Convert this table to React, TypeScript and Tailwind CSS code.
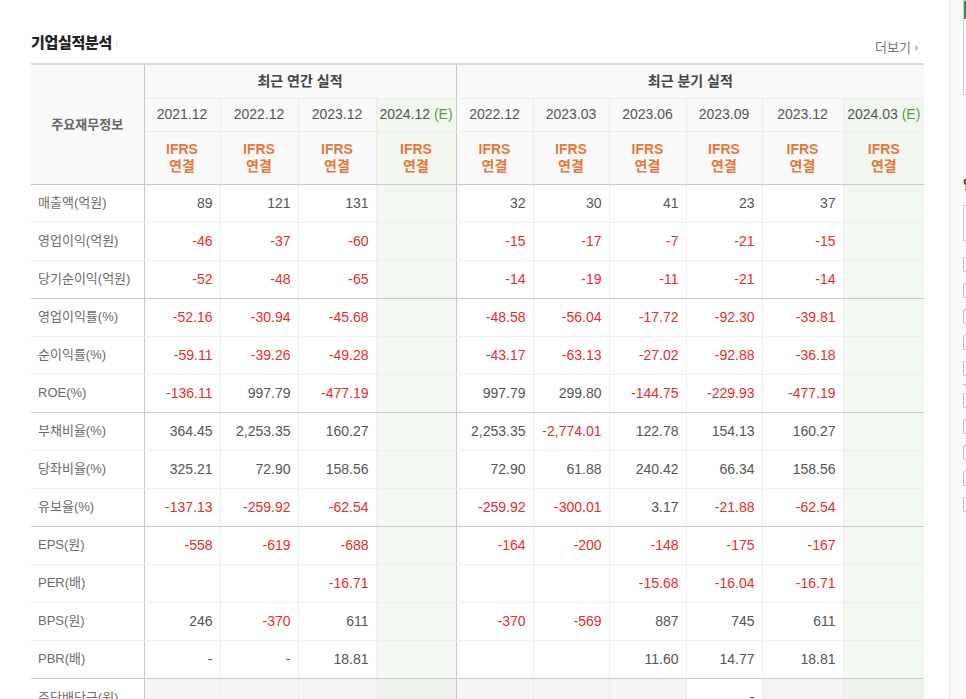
import React from 'react';

type Row = {
  label: string;
  annual: string[];
  quarter: string[];
  groupEnd?: boolean;
};

const ANNUAL_DATES = ['2021.12', '2022.12', '2023.12'];
const QUARTER_DATES = ['2022.12', '2023.03', '2023.06', '2023.09', '2023.12'];

const ROWS: Row[] = [
  { label: '매출액(억원)', annual: ['89', '121', '131'], quarter: ['32', '30', '41', '23', '37'] },
  { label: '영업이익(억원)', annual: ['-46', '-37', '-60'], quarter: ['-15', '-17', '-7', '-21', '-15'] },
  {
    label: '당기순이익(억원)',
    annual: ['-52', '-48', '-65'],
    quarter: ['-14', '-19', '-11', '-21', '-14'],
    groupEnd: true,
  },
  {
    label: '영업이익률(%)',
    annual: ['-52.16', '-30.94', '-45.68'],
    quarter: ['-48.58', '-56.04', '-17.72', '-92.30', '-39.81'],
  },
  {
    label: '순이익률(%)',
    annual: ['-59.11', '-39.26', '-49.28'],
    quarter: ['-43.17', '-63.13', '-27.02', '-92.88', '-36.18'],
  },
  {
    label: 'ROE(%)',
    annual: ['-136.11', '997.79', '-477.19'],
    quarter: ['997.79', '299.80', '-144.75', '-229.93', '-477.19'],
    groupEnd: true,
  },
  {
    label: '부채비율(%)',
    annual: ['364.45', '2,253.35', '160.27'],
    quarter: ['2,253.35', '-2,774.01', '122.78', '154.13', '160.27'],
  },
  {
    label: '당좌비율(%)',
    annual: ['325.21', '72.90', '158.56'],
    quarter: ['72.90', '61.88', '240.42', '66.34', '158.56'],
  },
  {
    label: '유보율(%)',
    annual: ['-137.13', '-259.92', '-62.54'],
    quarter: ['-259.92', '-300.01', '3.17', '-21.88', '-62.54'],
    groupEnd: true,
  },
  { label: 'EPS(원)', annual: ['-558', '-619', '-688'], quarter: ['-164', '-200', '-148', '-175', '-167'] },
  { label: 'PER(배)', annual: ['', '', '-16.71'], quarter: ['', '', '-15.68', '-16.04', '-16.71'] },
  { label: 'BPS(원)', annual: ['246', '-370', '611'], quarter: ['-370', '-569', '887', '745', '611'] },
  {
    label: 'PBR(배)',
    annual: ['-', '-', '18.81'],
    quarter: ['', '', '11.60', '14.77', '18.81'],
    groupEnd: true,
  },
];

const isNegative = (value: string) => value.startsWith('-') && value.length > 1;

const IfrsBadge = () => (
  <span className="block text-[14px] font-bold leading-[17px] text-[#e5793d]">
    IFRS
    <br />
    연결
  </span>
);

const ValueCell = ({
  value,
  groupEnd,
  divider,
  shaded,
}: {
  value: string;
  groupEnd?: boolean;
  divider?: boolean;
  shaded?: boolean;
}) => (
  <td
    className={`h-[38px] border-b border-r pr-[7px] text-right text-[14px] ${
      groupEnd ? 'border-b-[#c9c9c9]' : 'border-b-[#efefef]'
    } ${divider ? 'border-r-[#c9c9c9]' : 'border-r-[#efefef]'} ${
      shaded ? 'bg-[#f4f8f2]' : 'bg-white'
    } ${isNegative(value) ? 'text-[#e42d2d]' : 'text-[#555555]'}`}
  >
    {value}
  </td>
);

const Sidebar = () => (
  <aside className="h-full w-[17px] shrink-0 overflow-hidden border-l border-[#e6e6e6] bg-[#fafafa]">
    <div className="flex w-[200px] flex-col pl-[13px]">
      <div className="h-[95px] border border-[#cfcfcf] bg-white">
        <div className="h-[18px] bg-[#3f8f46]" />
      </div>
      <div className="mt-[82px] text-[13px] font-bold leading-[16px] text-[#333]">업종분석</div>
      <div className="mt-[12px] h-[36px] border border-[#cfcfcf] bg-white" />
      <div className="mt-[16px] flex flex-col gap-[11px]">
        {[0, 1, 2, 3, 4].map((i) => (
          <span key={i} className="h-[15px] w-[15px] rounded-[2px] border border-[#bdbdbd] bg-white" />
        ))}
      </div>
      <div className="my-[8px] h-px w-[6px] bg-[#bbb]" />
      <div className="flex flex-col gap-[11px]">
        {[0, 1, 2, 3, 4].map((i) => (
          <span key={i} className="h-[15px] w-[15px] rounded-[2px] border border-[#bdbdbd] bg-white" />
        ))}
      </div>
    </div>
  </aside>
);

export default function App() {
  return (
    <div
      className="flex h-[699px] w-[966px] overflow-hidden bg-white"
      style={{ fontFamily: '"Liberation Sans", "Noto Sans CJK KR", sans-serif' }}
    >
      <main className="min-w-0 flex-1 pl-[31px] pt-[32px]">
        <div className="flex h-[31px] w-[893px] items-start justify-between">
          <div className="mt-[1px] flex items-center gap-[4px]">
            <h2 className="text-[15px] font-extrabold leading-[20px] tracking-[-0.3px] text-[#222]">
              기업실적분석
            </h2>
            <span className="h-[5px] w-px bg-[#ddd]" />
          </div>
          <a className="mr-[5px] mt-[7px] flex items-center gap-[4px] text-[13px] leading-[18px] text-[#777]">
            더보기
            <span className="h-0 w-0 border-y-[3.5px] border-l-[4px] border-y-transparent border-l-[#c4c4c4]" />
          </a>
        </div>

        <table className="w-[893px] table-fixed border-collapse">
          <colgroup>
            <col className="w-[113px]" />
            <col className="w-[76px]" />
            <col className="w-[78px]" />
            <col className="w-[78px]" />
            <col className="w-[80px]" />
            <col className="w-[77px]" />
            <col className="w-[76px]" />
            <col className="w-[77px]" />
            <col className="w-[76px]" />
            <col className="w-[81px]" />
            <col className="w-[81px]" />
          </colgroup>
          <thead>
            <tr>
              <th
                rowSpan={3}
                className="border-b border-r border-t-2 border-b-[#c9c9c9] border-r-[#c9c9c9] border-t-[#d9d9d9] bg-[#f9f9f9] text-[13px] font-semibold text-[#666]"
              >
                주요재무정보
              </th>
              <th
                colSpan={4}
                className="h-[34px] border-b border-r border-t-2 border-b-[#ececec] border-r-[#c9c9c9] border-t-[#d9d9d9] bg-[#f9f9f9] text-[14px] font-semibold text-[#444]"
              >
                최근 연간 실적
              </th>
              <th
                colSpan={6}
                className="h-[34px] border-b border-t-2 border-b-[#ececec] border-t-[#d9d9d9] bg-[#f9f9f9] text-[14px] font-semibold text-[#444]"
              >
                최근 분기 실적
              </th>
            </tr>
            <tr>
              {ANNUAL_DATES.map((date) => (
                <th
                  key={`a-${date}`}
                  className="h-[33px] border-b border-r border-[#ececec] bg-[#f9f9f9] text-[14px] font-normal text-[#555]"
                >
                  {date}
                </th>
              ))}
              <th className="h-[33px] border-b border-r border-b-[#ececec] border-r-[#c9c9c9] bg-[#f1f6ef] text-[14px] font-normal text-[#555]">
                2024.12 <span className="text-[#5a9a4e]">(E)</span>
              </th>
              {QUARTER_DATES.map((date) => (
                <th
                  key={`q-${date}`}
                  className="h-[33px] border-b border-r border-[#ececec] bg-[#f9f9f9] text-[14px] font-normal text-[#555]"
                >
                  {date}
                </th>
              ))}
              <th className="h-[33px] border-b border-b-[#ececec] bg-[#f1f6ef] text-[14px] font-normal text-[#555]">
                2024.03 <span className="text-[#5a9a4e]">(E)</span>
              </th>
            </tr>
            <tr>
              {[0, 1, 2].map((i) => (
                <th key={`ai-${i}`} className="h-[53px] border-b border-r border-b-[#c9c9c9] border-r-[#ececec] bg-[#f9f9f9]">
                  <IfrsBadge />
                </th>
              ))}
              <th className="h-[53px] border-b border-r border-b-[#c9c9c9] border-r-[#c9c9c9] bg-[#f1f6ef]">
                <IfrsBadge />
              </th>
              {[0, 1, 2, 3, 4].map((i) => (
                <th key={`qi-${i}`} className="h-[53px] border-b border-r border-b-[#c9c9c9] border-r-[#ececec] bg-[#f9f9f9]">
                  <IfrsBadge />
                </th>
              ))}
              <th className="h-[53px] border-b border-b-[#c9c9c9] bg-[#f1f6ef]">
                <IfrsBadge />
              </th>
            </tr>
          </thead>
          <tbody>
            {ROWS.map((row) => (
              <tr key={row.label}>
                <td
                  className={`h-[38px] border-b border-r border-r-[#c9c9c9] pl-[7px] text-left text-[13px] text-[#6b6b6b] ${
                    row.groupEnd ? 'border-b-[#c9c9c9]' : 'border-b-[#efefef]'
                  }`}
                >
                  {row.label}
                </td>
                {row.annual.map((value, i) => (
                  <ValueCell key={`a-${i}`} value={value} groupEnd={row.groupEnd} />
                ))}
                <ValueCell value="" groupEnd={row.groupEnd} divider shaded />
                {row.quarter.map((value, i) => (
                  <ValueCell key={`q-${i}`} value={value} groupEnd={row.groupEnd} />
                ))}
                <td
                  className={`h-[38px] border-b bg-[#f4f8f2] ${
                    row.groupEnd ? 'border-b-[#c9c9c9]' : 'border-b-[#efefef]'
                  }`}
                />
              </tr>
            ))}
            <tr>
              <td className="h-[38px] border-r border-r-[#c9c9c9] pl-[7px] text-left text-[13px] text-[#6b6b6b]">
                주당배당금(원)
              </td>
              {[0, 1, 2].map((i) => (
                <td key={`da-${i}`} className="h-[38px] border-r border-[#ececec] bg-[#f4f4f4]" />
              ))}
              <td className="h-[38px] border-r border-[#c9c9c9] bg-[#eef2ec]" />
              <td className="h-[38px] border-r border-[#ececec] bg-[#f4f4f4]" />
              <td className="h-[38px] border-r border-[#ececec] bg-[#f4f4f4]" />
              <td className="h-[38px] border-r border-[#ececec] bg-[#f4f4f4]" />
              <td className="h-[38px] border-r border-[#ececec] bg-white pr-[7px] text-right text-[14px] text-[#555]">
                -
              </td>
              <td className="h-[38px] border-r border-[#ececec] bg-[#f4f4f4]" />
              <td className="h-[38px] bg-[#eef2ec]" />
            </tr>
          </tbody>
        </table>
      </main>
      <Sidebar />
    </div>
  );
}
